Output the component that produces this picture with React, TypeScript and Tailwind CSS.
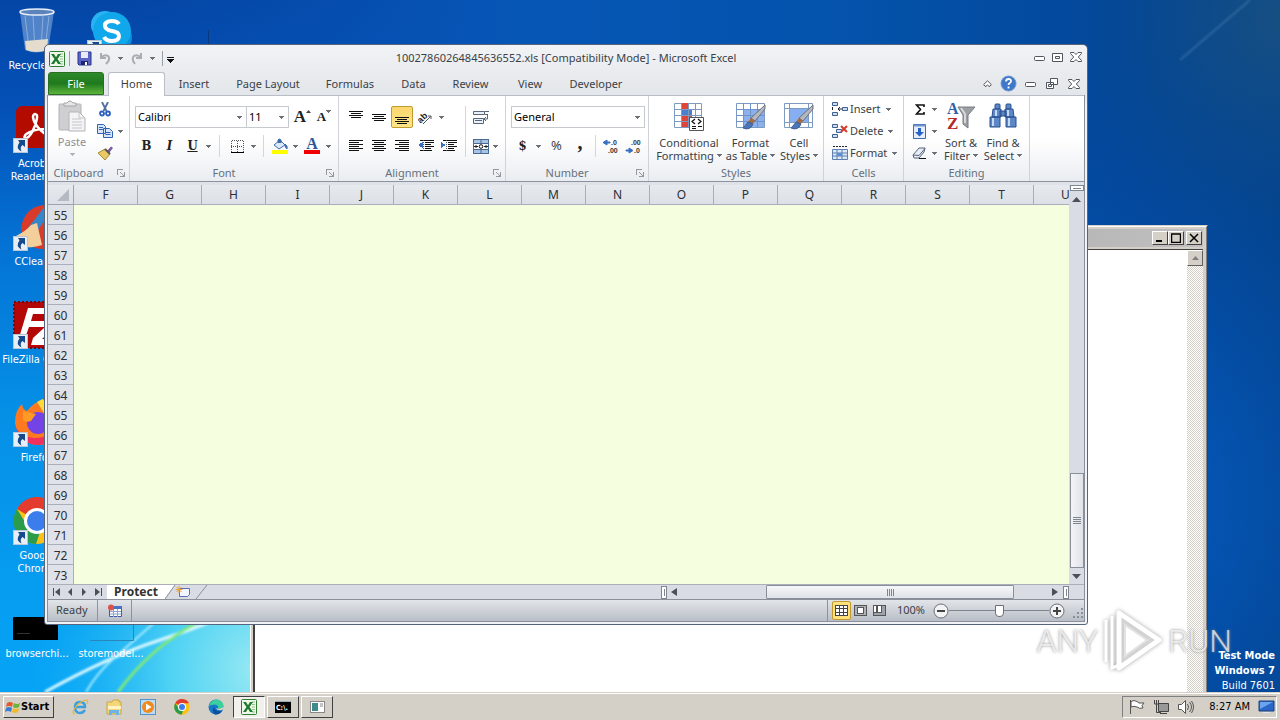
import type { ReactNode } from "react";

const columns = "FGHIJKLMNOPQRSTU".split("");
const rows = Array.from({ length: 19 }, (_, i) => i + 55);

/* ---------- small shared bits ---------- */

const Drop = ({ className = "" }: { className?: string }) => (
  <svg width="5" height="3" viewBox="0 0 5 3" className={`shrink-0 ${className}`} shapeRendering="crispEdges">
    <path d="M0 0h5L2.5 3z" fill="#6b6f76" />
  </svg>
);

const DropButton = ({ label, className = "w-2" }: { label: string; className?: string }) => (
  <button aria-label={label} className={`flex h-[22px] items-center justify-center ${className}`}>
    <Drop />
  </button>
);

const Tool = ({
  label,
  className = "w-[23px]",
  children,
}: {
  label: string;
  className?: string;
  children: ReactNode;
}) => (
  <button aria-label={label} className={`flex h-[22px] shrink-0 items-center justify-center ${className}`}>
    {children}
  </button>
);

const Divider = ({ className = "bg-[#d3d6da]" }: { className?: string }) => (
  <div className={`w-px shrink-0 self-stretch ${className}`} />
);

const Group = ({
  title,
  launcher,
  className = "",
  children,
}: {
  title: string;
  launcher?: boolean;
  className?: string;
  children: ReactNode;
}) => (
  <section className={`flex shrink-0 flex-col border-r border-[#cfd3d8] ${className}`}>
    <div className="h-[69px]">{children}</div>
    <div className="relative flex h-4 items-center justify-center text-[#66707c]">
      <span className={launcher ? "pr-5" : ""}>{title}</span>
      {launcher && (
        <button aria-label={`${title} options`} className="absolute right-1 top-1">
          <svg width="8" height="8" viewBox="0 0 8 8" fill="none" stroke="#9398a0" shapeRendering="crispEdges">
            <path d="M.5 6V.5H6M3 3l4 4M7.500 3v4.500H3" />
          </svg>
        </button>
      )}
    </div>
  </section>
);

type Line = [x: number, y: number, width: number];

const Lines = ({ rows }: { rows: Line[] }) => (
  <svg width="15" height="15" viewBox="0 0 15 15" shapeRendering="crispEdges">
    {rows.map(([x, y, w]) => (
      <rect key={y} x={x} y={y} width={w} height="1" fill="#111" />
    ))}
  </svg>
);

const ExcelIcon = () => (
  <svg width="16" height="16" viewBox="0 0 16 16">
    <rect x=".5" y=".5" width="15" height="15" rx="1" fill="#eef7ea" stroke="#2f7d32" />
    <path d="M11 3h3M11 5.500h3M11 8h3M11 10.500h3M11 13h3" stroke="#8fc48a" />
    <path d="M2 3h3l2 3.300L9 3h3L8.500 8l3.500 5H9L7 9.700 5 13H2l3.500-5z" fill="#1f7a2c" />
  </svg>
);

const Select = ({ label, value, className }: { label: string; value: string; className: string }) => (
  <div className={`relative h-[22px] border border-[#c6cacf] bg-white ${className}`}>
    <select
      aria-label={label}
      defaultValue={value}
      className="h-full w-full appearance-none bg-transparent pl-[2px] text-[11px] text-black outline-none"
    >
      <option>{value}</option>
    </select>
    <Drop className="pointer-events-none absolute right-1 top-[9px]" />
  </div>
);

/* ---------- desktop ---------- */

const Wallpaper = () => (
  <svg className="absolute inset-0 h-full w-full" viewBox="0 0 1280 692" preserveAspectRatio="none" aria-hidden="true">
    <defs>
      <linearGradient id="base" x1="0" y1="0" x2="0" y2="1">
        <stop offset="0" stopColor="#0446a6" />
        <stop offset=".15" stopColor="#0450b6" />
        <stop offset=".35" stopColor="#0472d4" />
        <stop offset=".6" stopColor="#0590e6" />
        <stop offset="1" stopColor="#06a4f6" />
      </linearGradient>
      <linearGradient id="east" x1="0" y1="0" x2="1" y2="0">
        <stop offset=".1" stopColor="#0650b2" stopOpacity="0" />
        <stop offset=".4" stopColor="#0656b6" />
        <stop offset=".65" stopColor="#0453ac" />
        <stop offset=".88" stopColor="#03479a" />
        <stop offset="1" stopColor="#04448e" />
      </linearGradient>
      <radialGradient id="glow" gradientUnits="userSpaceOnUse" cx="260" cy="670" r="230">
        <stop offset="0" stopColor="#9aeaf2" />
        <stop offset=".4" stopColor="#4ed2f4" />
        <stop offset="1" stopColor="#12b0f5" stopOpacity="0" />
      </radialGradient>
      <radialGradient id="blue" gradientUnits="userSpaceOnUse" cx="1090" cy="500" r="360">
        <stop offset="0" stopColor="#0560c8" />
        <stop offset="1" stopColor="#0450b0" stopOpacity="0" />
      </radialGradient>
      <radialGradient id="corner" gradientUnits="userSpaceOnUse" cx="1280" cy="20" r="220">
        <stop offset="0" stopColor="#174f82" />
        <stop offset="1" stopColor="#0a4a8c" stopOpacity="0" />
      </radialGradient>
      <filter id="soft">
        <feGaussianBlur stdDeviation="1" />
      </filter>
    </defs>
    <rect width="1280" height="692" fill="url(#base)" />
    <rect width="1280" height="692" fill="url(#east)" />
    <rect width="1280" height="692" fill="url(#blue)" />
    <rect width="1280" height="692" fill="url(#corner)" />
    <rect width="600" height="692" fill="url(#glow)" />
    <path d="M1180 60 1250 0" stroke="#4a83b5" strokeWidth="2" opacity=".5" filter="url(#soft)" />
    <path d="M208.500 30v16" stroke="#083a80" />
    <g fill="none" filter="url(#soft)">
      <path d="M45 692Q110 656 160 640 185 632 210 622" stroke="#d8f8ff" strokeWidth="3" />
      <path d="M86 692Q98 672 112 660L155 622" stroke="#a5ecff" strokeWidth="2" />
      <path d="M118 692Q150 648 198 622" stroke="#7fe87a" strokeWidth="3" />
    </g>
  </svg>
);

const ShortcutArrow = () => (
  <g>
    <rect x=".5" y="33.500" width="14" height="14" fill="#e8eef5" stroke="#b8c6d6" />
    <path d="M5 35h7v7l-2.500-2q-3 2-1 6.500Q2 43 6.500 37.500z" fill="#174a8c" />
  </g>
);

const DesktopIcon = ({
  label,
  className = "",
  children,
}: {
  label?: string;
  className?: string;
  children: ReactNode;
}) => (
  <a
    href="#"
    className={`flex flex-col items-center pt-[7px] text-center font-[family-name:'DejaVu_Sans_Condensed','DejaVu_Sans',sans-serif] text-[11px] leading-[13px] text-white ${className}`}
  >
    <svg width="48" height="48" viewBox="0 0 48 48" className="mb-1 shrink-0" aria-hidden="true">
      {children}
    </svg>
    {label && <span className="w-[72px]">{label}</span>}
  </a>
);

const Desktop = () => (
  <nav aria-label="Desktop" className="relative grid w-[148px] auto-rows-[98px] grid-cols-2">
    <DesktopIcon label="Recycle Bin" className="col-start-1 row-start-1">
      <path d="M7 5 12 43q12 5 23 0L41 5z" fill="#9dbde6" opacity=".5" />
      <path d="m12 9 4 32M20 9l2 34M30 9l-2 34M36 9l-4 32" stroke="#dfeaf8" opacity=".4" />
      <path d="m12 34 23-2-1 11q-11 4-21 0z" fill="#e4dccd" />
      <ellipse cx="24" cy="5" rx="17" ry="3" fill="#5d83bd" stroke="#e6eef8" strokeWidth="1.500" />
    </DesktopIcon>
    <DesktopIcon className="col-start-2 row-start-1">
      <circle cx="18" cy="18" r="14" fill="#28b4f2" />
      <circle cx="31" cy="31" r="14" fill="#0a8ee0" />
      <circle cx="25" cy="24" r="19" fill="#10a8ea" />
      <path
        d="M32 17q-2-3-7-3-7 0-7 4.500t7 5.500q7 1 7 5 0 5-7 5-6 0-8-4"
        fill="none"
        stroke="#fff"
        strokeWidth="4"
      />
      <ShortcutArrow />
    </DesktopIcon>
    <DesktopIcon label="Acrobat Reader DC" className="col-start-1 row-start-2">
      <rect x="3" y="1" width="43" height="42" rx="6" fill="#b30b00" />
      <path
        d="M12 33c-3-4 9-8 15-9 6 0 12 2 10 5-3 4-16-8-17-17 0-4 5-4 4 1-1 8-7 21-12 20z"
        fill="none"
        stroke="#fff"
        strokeWidth="2.500"
      />
      <ShortcutArrow />
    </DesktopIcon>
    <DesktopIcon label="CCleaner" className="col-start-1 row-start-3">
      <path d="M8 25Q11 5 30 2q17 0 17 22T30 46Q12 46 8 25" fill="#d93b2b" />
      <path d="M15 25 32 3l7 4-17 24z" fill="#3487cc" />
      <path d="M3 33q10-5 15-11l6-2 5 22q-14 4-20 1z" fill="#f2cf9b" />
      <ShortcutArrow />
    </DesktopIcon>
    <DesktopIcon label="FileZilla Client" className="col-start-1 row-start-4">
      <rect x="1" y="1" width="46" height="46" fill="#b40808" stroke="#7e0505" strokeWidth="2" strokeDasharray="2 2" />
      <path d="M15 7h20l-2 6H20l-2 7h12l-2 6H16l-4 11H6zM24 20h20l-3 6-12 12h13l-2 6H18l2-7 12-11h-9z" fill="#fff" />
      <ShortcutArrow />
    </DesktopIcon>
    <DesktopIcon label="Firefox" className="col-start-1 row-start-5">
      <path d="M2 24Q2 11 9 5q1 6 5 7Q24 0 31 2q4 6 10 9 6 8 5 17-3 18-21 18Q6 45 2 24" fill="#ff7a1f" />
      <path d="M24 3q5-3 6-3 4 7 11 11 4 4 3 12l-13-9z" fill="#ffd83c" />
      <path d="M3 29q9 13 27 9l13-7q-4 14-17 15Q8 46 3 29" fill="#f0315f" />
      <circle cx="25" cy="24" r="11" fill="#7542e5" />
      <path d="m10 12 13 3-5 7q-6 2-8-1z" fill="#ff9b24" />
      <ShortcutArrow />
    </DesktopIcon>
    <DesktopIcon label="Google Chrome" className="col-start-1 row-start-6">
      <circle cx="24" cy="24" r="23" fill="#fbc116" />
      <path d="M24 24 4 12A23 23 0 0 1 45 13H24z" fill="#e33b2e" />
      <path d="M4 12 15 30l12 5-4 12A23 23 0 0 1 4 12" fill="#2c9b4a" />
      <circle cx="24" cy="24" r="13" fill="#fff" />
      <circle cx="24" cy="24" r="10" fill="#3b7ded" />
      <ShortcutArrow />
    </DesktopIcon>
    <DesktopIcon label="browserchi..." className="col-start-1 row-start-7">
      <rect x="0" y="22" width="45" height="23" />
      <path d="M4 38.500h13" stroke="#333" />
    </DesktopIcon>
    <DesktopIcon label="storemodel..." className="col-start-2 row-start-7">
      <path d="M3 45.500h43.500V22" fill="none" stroke="#2a86b8" />
    </DesktopIcon>
  </nav>
);

/* ---------- classic window behind ---------- */

const CaptionButton = ({ label, children }: { label: string; children: ReactNode }) => (
  <button
    aria-label={label}
    className="flex h-[14px] w-4 items-center justify-center border border-[#404040] border-l-white border-t-white bg-[#d4d0c8]"
  >
    <svg width="10" height="10" viewBox="0 0 10 10" fill="none" stroke="#000" strokeWidth="2">
      {children}
    </svg>
  </button>
);

const ClassicWindow = () => (
  <div className="absolute bottom-0 left-[250px] right-[72px] top-[225px] flex flex-col border-r border-t border-r-[#404040] border-t-[#d4d0c8] bg-[#d4d0c8]">
    <div className="flex flex-1 flex-col border-l border-r border-t border-l-white border-r-[#808080] border-t-white pl-[2px] pr-[3px] pt-[2px]">
      <div className="flex h-[18px] items-center justify-end bg-linear-to-r from-[#808080] to-[#c0c0c0] pr-px">
        <CaptionButton label="Minimize">
          <path d="M1 8h6" />
        </CaptionButton>
        <CaptionButton label="Maximize">
          <path d="M0 1h10M.5 1v8.500h9V1" strokeWidth="1.500" />
        </CaptionButton>
        <div className="w-[2px]" />
        <CaptionButton label="Close">
          <path d="m1 1 8 8M9 1 1 9" strokeWidth="1.500" />
        </CaptionButton>
      </div>
      <div className="mt-[2px] flex flex-1 border-l-2 border-t border-l-[#404040] border-t-[#404040] bg-white">
        <div className="flex-1" />
        <div className="w-4 bg-[repeating-conic-gradient(#d4d0c8_0_25%,#fff_0_50%)] bg-[length:2px_2px]">
          <button
            aria-label="Scroll up"
            className="flex h-4 w-4 items-center justify-center border border-[#606060] border-l-white border-t-white bg-[#d4d0c8]"
          >
            <svg width="7" height="4" viewBox="0 0 7 4">
              <path d="M0 4h7L3.500 0z" fill="#808080" />
            </svg>
          </button>
        </div>
      </div>
    </div>
  </div>
);

/* ---------- spreadsheet window ---------- */

const MinGlyph = () => (
  <svg width="11" height="9" viewBox="0 0 11 9">
    <rect x=".5" y="3.500" width="10" height="4" rx="1" fill="#fff" stroke="#50565f" />
  </svg>
);

const CloseGlyph = () => (
  <svg width="12" height="10" viewBox="0 0 12 10">
    <path
      d="M.5.5h3.500l2 2 2-2h3.500v1L8.300 5l3.200 3.500v1H8l-2-2-2 2H.5v-1L3.700 5 .5 1.500z"
      fill="#fff"
      stroke="#50565f"
    />
  </svg>
);

const TitleBar = () => (
  <header className="relative flex h-[27px] shrink-0 items-center pl-[2px] pr-[3px]">
    <ExcelIcon />
    <Divider className="my-[6px] ml-1 bg-[#9aa0a8]" />
    <Tool label="Save" className="ml-[3px] w-[22px]">
      <svg width="15" height="15" viewBox="0 0 15 15">
        <path d="M1 1h13v13H2L1 13z" fill="#5b63c4" stroke="#2b3390" />
        <path d="M4 1h7v6H4z" fill="#e8ecfa" />
        <path d="M4 10h7v4H4z" fill="#1f2670" />
        <path d="M8 11h2v3H8z" fill="#fff" />
      </svg>
    </Tool>
    <Tool label="Undo" className="w-[21px]">
      <svg width="13" height="13" viewBox="0 0 13 13" fill="none" stroke="#a9adb3" strokeWidth="2">
        <path d="M2 1v5h5M2 6q3-4 7-2 3 3-2 8" />
      </svg>
    </Tool>
    <DropButton label="Undo list" />
    <Tool label="Redo" className="w-[24px]">
      <svg width="13" height="13" viewBox="0 0 13 13" fill="none" stroke="#a9adb3" strokeWidth="2">
        <path d="M11 1v5H6M11 6Q8 2 4 4q-3 3 1 8" />
      </svg>
    </Tool>
    <DropButton label="Redo list" />
    <Divider className="my-[6px] ml-[6px] bg-[#9aa0a8]" />
    <Tool label="Customize toolbar" className="w-[14px] pt-[2px]">
      <svg width="7" height="6" viewBox="0 0 7 6" shapeRendering="crispEdges">
        <path d="M0 0h7v1H0zM0 2h7L3.500 6z" fill="#111" />
      </svg>
    </Tool>
    <h1 className="pointer-events-none absolute inset-x-0 whitespace-pre text-center">
      10027860264845636552.xls [Compatibility Mode] - Microsoft Excel
    </h1>
    <div className="ml-auto flex items-center gap-[7px] pb-[3px]">
      <button aria-label="Minimize">
        <MinGlyph />
      </button>
      <button aria-label="Maximize">
        <svg width="11" height="9" viewBox="0 0 11 9" fill="#fff" stroke="#50565f">
          <path d="M.5.5h10v8H.5zM3.500 3.500h4v2h-4z" />
        </svg>
      </button>
      <button aria-label="Close">
        <CloseGlyph />
      </button>
    </div>
  </header>
);

const tabs = [
  ["Insert", "w-[58px]"],
  ["Page Layout", "w-[90px]"],
  ["Formulas", "w-[74px]"],
  ["Data", "w-[53px]"],
  ["Review", "w-[61px]"],
  ["View", "w-[58px]"],
  ["Developer", "w-[74px]"],
];

const TabStrip = () => (
  <div className="flex h-[23px] shrink-0 items-stretch px-px">
    <button className="w-14 rounded-t-[3px] border border-[#2a6d20] bg-linear-to-b from-[#2f8a2b] via-[#1f7a1e] to-[#5cb43c] pt-px text-white">
      File
    </button>
    <button className="relative z-10 -mb-px ml-1 w-[57px] rounded-t-[3px] border border-b-0 border-[#b9bec6] bg-white">
      Home
    </button>
    {tabs.map(([name, width]) => (
      <button key={name} className={`pt-[2px] ${width}`}>
        {name}
      </button>
    ))}
    <div className="ml-auto flex items-center gap-[10px] pr-1">
      <button aria-label="Minimize the ribbon">
        <svg width="9" height="7" viewBox="0 0 9 7" fill="#fff" stroke="#50565f">
          <path d="M4.500.8 8.300 4.500 7 6.300H6L4.500 5 3 6.300H2L.7 4.500z" />
        </svg>
      </button>
      <button aria-label="Help" className="-mx-[2px]">
        <svg width="17" height="17" viewBox="0 0 17 17">
          <circle cx="8.500" cy="8.500" r="7.500" fill="#3f78c9" stroke="#6d97d6" />
          <path
            d="M6 6.500q0-2.500 2.600-2.500T11 6.300q0 1.200-1.500 2-1 .6-1 1.700M8.500 11.500v2"
            fill="none"
            stroke="#fff"
            strokeWidth="1.800"
          />
        </svg>
      </button>
      <button aria-label="Minimize workbook">
        <MinGlyph />
      </button>
      <button aria-label="Restore workbook">
        <svg width="12" height="11" viewBox="0 0 12 11" fill="#fff" stroke="#50565f">
          <path d="M4.500.5h7v6h-7zM.5 4.500h7v6h-7zM2.500 6.500h3v2h-3z" />
        </svg>
      </button>
      <button aria-label="Close workbook">
        <CloseGlyph />
      </button>
    </div>
  </div>
);

const Serif = ({ className = "text-[#222]", children }: { className?: string; children: ReactNode }) => (
  <span className={`font-[family-name:'Liberation_Serif',serif] font-bold ${className}`}>{children}</span>
);

const Slab = ({ className = "", children }: { className?: string; children: ReactNode }) => (
  <span
    className={`font-[family-name:'DejaVu_Serif_Condensed','DejaVu_Serif',serif] text-[13px] font-bold text-[#222] ${className}`}
  >
    {children}
  </span>
);

const ClipboardGroup = () => (
  <Group title="Clipboard" launcher className="w-[82px]">
    <div className="flex pt-[2px]">
      <button className="flex w-12 flex-col items-center pt-[2px] text-[#8b8f94]">
        <svg width="30" height="33" viewBox="0 0 30 33">
          <rect x="2" y="4" width="22" height="26" rx="1" fill="#cfcfd1" stroke="#b4b4b8" />
          <path d="M7 6V3h3q3-4 6 0h3v3z" fill="#e6e6e8" stroke="#a5a5a9" />
          <path d="M12 12h10l6 6v13H12z" fill="#f4f4f6" stroke="#b4b4b8" />
          <path d="M22 12v6h6M15 19h9M15 22h10M15 25h10M15 28h10" fill="none" stroke="#c6c6ca" />
        </svg>
        <span className="leading-[18px]">Paste</span>
        <Drop className="mt-[2px] opacity-50" />
      </button>
      <div className="flex flex-col">
        <Tool label="Cut" className="w-[18px]">
          <svg width="12" height="15" viewBox="0 0 12 15" fill="none" stroke="#2a5fc0" strokeWidth="1.800">
            <path d="M3 0 7.500 9M9 0 4.500 9" stroke="#4f6f9e" />
            <circle cx="3" cy="11.500" r="2" />
            <circle cx="9" cy="11.500" r="2" />
          </svg>
        </Tool>
        <div className="flex">
          <Tool label="Copy" className="w-[18px]">
            <svg width="16" height="14" viewBox="0 0 16 14" fill="#d6e5fa" stroke="#2f63b0">
              <path d="M.5.5h6l2 2v7h-8zM6.500 4.500h6l3 3v6h-9z" />
              <path d="M2 3.500h4M2 5.500h4M8.500 8.500h5M8.500 10.500h5" />
            </svg>
          </Tool>
          <DropButton label="Copy options" className="w-3" />
        </div>
        <Tool label="Format painter" className="w-[18px]">
          <svg width="16" height="14" viewBox="0 0 16 14">
            <path d="m10 5 4-4.500L16 2l-4 5z" fill="#7a5b9a" />
            <path d="M1 7 8 3l5 5-5 6z" fill="#e9c865" stroke="#a98a35" />
            <path d="m8 3 5 5" stroke="#555" strokeWidth="2" />
          </svg>
        </Tool>
      </div>
    </div>
  </Group>
);

const FontGroup = () => (
  <Group title="Font" launcher className="w-[209px]">
    <div className="flex flex-col gap-[7px] pl-[5px] pt-[10px]">
      <div className="flex">
        <Select label="Font" value="Calibri" className="w-[112px]" />
        <Select label="Font size" value="11" className="-ml-px w-[43px]" />
        <Tool label="Increase font size" className="w-[27px]">
          <Serif className="text-[17px] leading-4 text-[#222]">A</Serif>
          <svg width="5" height="3" viewBox="0 0 5 3" className="mb-3">
            <path d="M0 3h5L2.500 0z" fill="#444" />
          </svg>
        </Tool>
        <Tool label="Decrease font size" className="w-4">
          <Serif className="text-[13px] text-[#222]">A</Serif>
          <Drop className="mb-3" />
        </Tool>
      </div>
      <div className="flex items-center">
        <Tool label="Bold">
          <Slab>B</Slab>
        </Tool>
        <Tool label="Italic">
          <Slab className="italic">I</Slab>
        </Tool>
        <Tool label="Underline">
          <Slab className="underline">U</Slab>
        </Tool>
        <DropButton label="Underline style" />
        <Divider className="mx-[7px] bg-[#d3d6da]" />
        <Tool label="Borders" className="w-5">
          <svg width="13" height="13" viewBox="0 0 13 13" fill="none" stroke="#555" shapeRendering="crispEdges">
            <path d="M.5.5h12v11M.5.5v11M6.500.5v11M0 6.500h12" strokeDasharray="1 1" />
            <path d="M0 12.500h13" stroke="#000" />
          </svg>
        </Tool>
        <DropButton label="Border style" className="w-3" />
        <Divider className="mx-1 bg-[#d3d6da]" />
        <Tool label="Fill color" className="w-[23px]">
          <svg width="16" height="16" viewBox="0 0 16 16">
            <path d="m2 7 6-5 5 5-6 4z" fill="#dbe8f8" stroke="#3f6cab" />
            <path d="M6 5V2q1-2 3 0v3M13 6q3 2 2 5-2-1-2-5" fill="#3f6cab" stroke="#3f6cab" />
            <path d="M0 12h16v4H0z" fill="#ff0" />
          </svg>
        </Tool>
        <DropButton label="Fill colors" />
        <Tool label="Font color" className="w-[26px]">
          <span className="flex flex-col items-center">
            <Serif className="text-base leading-3 text-[#2f5597]">A</Serif>
            <span className="h-1 w-4 bg-[#f00000]" />
          </span>
        </Tool>
        <DropButton label="Font colors" className="w-[6px]" />
      </div>
    </div>
  </Group>
);

const centered = (top: number, count: number): Line[] =>
  Array.from({ length: count }, (_, i) => (i % 2 ? [2, top + i * 2, 10] : [0, top + i * 2, 14]));

const AlignmentGroup = () => (
  <Group title="Alignment" launcher className="w-[167px]">
    <div className="flex pl-[6px] pt-[10px]">
      <div className="flex w-[120px] flex-col gap-[7px]">
        <div className="flex items-center">
          <Tool label="Top align">
            <Lines rows={centered(1, 4)} />
          </Tool>
          <Tool label="Middle align">
            <Lines rows={centered(4, 4)} />
          </Tool>
          <Tool
            label="Bottom align"
            className="w-[22px] rounded-[2px] border border-[#c29b2e] bg-linear-to-b from-[#fbd76c] to-[#ffe58a]"
          >
            <Lines rows={centered(7, 4)} />
          </Tool>
          <Tool label="Orientation" className="w-6">
            <svg width="18" height="18" viewBox="0 0 18 18" fill="none" stroke="#555">
              <path d="M7 16 15 8M12 8h3v3" />
              <text
                x="1"
                y="13"
                transform="rotate(-45 6 10)"
                fill="#222"
                stroke="none"
                fontSize="9"
                fontWeight="bold"
                fontFamily="Liberation Sans"
              >
                ab
              </text>
            </svg>
          </Tool>
          <DropButton label="Orientation options" />
        </div>
        <div className="flex items-center">
          <Tool label="Align left">
            <Lines rows={[[0, 1, 14], [0, 3, 10], [0, 5, 14], [0, 7, 10], [0, 9, 14], [0, 11, 10]]} />
          </Tool>
          <Tool label="Center">
            <Lines rows={centered(1, 6)} />
          </Tool>
          <Tool label="Align right">
            <Lines rows={[[0, 1, 14], [4, 3, 10], [0, 5, 14], [4, 7, 10], [0, 9, 14], [4, 11, 10]]} />
          </Tool>
          {[
            ["Decrease indent", "M5 3 0 6l5 3z"],
            ["Increase indent", "M0 3l5 3-5 3z"],
          ].map(([label, d]) => (
            <Tool key={label} label={label} className="ml-px w-[22px]">
              <svg width="16" height="14" viewBox="0 0 16 14" shapeRendering="crispEdges">
                <path d="M2 1.500h14M7 3.500h9M7 5.500h6M7 7.500h9M7 9.500h6M2 11.500h12" stroke="#111" />
                <path d={d} fill="#3a6fc0" />
                <path d="M5.500 1v12" stroke="#555" strokeDasharray="1 1" />
              </svg>
            </Tool>
          ))}
        </div>
      </div>
      <Divider />
      <div className="flex flex-col gap-[7px] pl-[3px]">
        <Tool label="Wrap text">
          <svg width="16" height="15" viewBox="0 0 16 15" fill="#eaf0f8" stroke="#5a6577">
            <path d="M.5 1.500h11v3H.5zM.5 8.500h10v5H.5z" />
            <path d="M2 10.500h7M12 1.500h4M12 4.500h3M14.500 5v4h-3M13 7l-2 2 2 2" fill="none" />
          </svg>
        </Tool>
        <div className="flex">
          <Tool label="Merge and center">
            <svg width="16" height="15" viewBox="0 0 16 15">
              <rect x=".5" y=".5" width="15" height="14" fill="#a9c3e4" stroke="#4a6a94" />
              <path d="M1 4.500h15M1 10.500h15M8 0v4M8 11v4" stroke="#4a6a94" />
              <path d="M1 5h14v5H1z" fill="#fff" />
              <path d="M1 7.500h4M11 7.500h4M3 6v3M13 6v3" stroke="#222" />
              <circle cx="8" cy="7.500" r="1.800" fill="none" stroke="#111" />
            </svg>
          </Tool>
          <DropButton label="Merge options" className="w-[6px]" />
        </div>
      </div>
    </div>
  </Group>
);

const DecimalIcon = ({ left }: { left?: boolean }) => (
  <svg width="18" height="18" viewBox="0 0 18 18" fontSize="7" fontWeight="bold" fontFamily="Liberation Sans" fill="#333">
    <text x={left ? 9 : 6} y="8">
      {left ? ".0" : ".00"}
    </text>
    <text x={left ? 6 : 9} y="16">
      {left ? ".00" : ".0"}
    </text>
    {left ? (
      <path d="M1 5.500 5 3v2h3v1H5v2z" fill="#3a6fc0" stroke="#3a6fc0" />
    ) : (
      <path d="M8 13.500 4 11v2H1v1h3v2z" fill="#3a6fc0" stroke="#3a6fc0" />
    )}
  </svg>
);

const NumberGroup = () => (
  <Group title="Number" launcher className="w-[143px]">
    <div className="flex flex-col gap-[7px] pl-[5px] pt-[10px]">
      <Select label="Number format" value="General" className="w-[134px]" />
      <div className="flex items-center">
        <Tool label="Accounting format">
          <Slab className="leading-4">$</Slab>
        </Tool>
        <DropButton label="Currencies" />
        <Tool label="Percent style" className="ml-[3px] w-[23px]">
          <span className="text-[13px]">%</span>
        </Tool>
        <Tool label="Comma style" className="w-6">
          <Serif className="pb-2 text-xl leading-4 text-[#222]">,</Serif>
        </Tool>
        <Divider className="mx-[3px] bg-[#d3d6da]" />
        <Tool label="Increase decimal">
          <DecimalIcon left />
        </Tool>
        <Tool label="Decrease decimal">
          <DecimalIcon />
        </Tool>
      </div>
    </div>
  </Group>
);

const BigButton = ({
  lines,
  className,
  children,
}: {
  lines: [string, string];
  className: string;
  children: ReactNode;
}) => (
  <button className={`flex shrink-0 flex-col items-center whitespace-nowrap leading-[13px] ${className}`}>
    <svg width="32" height="32" viewBox="0 0 32 32" className="mb-1">
      {children}
    </svg>
    <span>{lines[0]}</span>
    <span className="flex items-center gap-[3px]">
      {lines[1]}
      <Drop />
    </span>
  </button>
);

const Brush = () => (
  <g>
    <path d="m30 9-10 12-4-3L30 5z" fill="#b4b8bf" stroke="#6d727b" />
    <path d="m20 21-4-3-3 4 4 3z" fill="#a8693c" />
    <path d="M13 22q-2 3-5 6 7 3 10-4z" fill="#4a76b8" stroke="#3c5f94" />
  </g>
);

const StylesGroup = () => (
  <Group title="Styles" className="w-[175px]">
    <div className="flex pl-[7px] pt-1">
      <BigButton lines={["Conditional", "Formatting"]} className="w-[66px]">
        <path d="M1.500 3.500h27v24h-27z" fill="#fff" stroke="#7f9ac0" />
        <path d="M8 3h7v6H8zM8 15h11v6H8zM8 21h7v6H8z" fill="#e0453a" />
        <path d="M8 9h11v6H8z" fill="#4a7fd0" />
        <path d="M1 9.500h28M1 15.500h28M1 21.500h28M8.500 3v25M15.500 3v25M22.500 3v25" stroke="#7f9ac0" fill="none" />
        <path d="M16.500 17.500h14v13h-14z" fill="#fff" stroke="#555" />
        <path
          d="m22 19-3 2.500 3 2.500M19 26.500h4M25 19l3 2.500-3 2.500M19 28.500h4M25 26.500h4"
          fill="none"
          stroke="#111"
          strokeWidth="1.200"
        />
      </BigButton>
      <BigButton lines={["Format", "as Table"]} className="w-[57px]">
        <path d="M1.500 3.500h28v24h-28z" fill="#fff" stroke="#7f9ac0" />
        <path d="M8 9h21v18H8z" fill="#8cb0ec" />
        <path d="M1 9.500h29M1 15.500h29M1 21.500h29M8.500 3v25M15.500 3v25M22.500 3v25" stroke="#6d92cc" fill="none" />
        <Brush />
      </BigButton>
      <BigButton lines={["Cell", "Styles"]} className="w-10">
        <path d="M1.500 3.500h28v24h-28z" fill="#fff" stroke="#7f9ac0" />
        <path d="M1 8.500h29M1 22.500h29M6.500 3v25M25.500 3v25" stroke="#7f9ac0" fill="none" />
        <path d="M7 9h18v13H7z" fill="#86aef0" />
        <Brush />
      </BigButton>
    </div>
  </Group>
);

const RowButton = ({ label, children }: { label: string; children: ReactNode }) => (
  <button className="flex h-[22px] items-center gap-[2px]">
    <svg width="16" height="16" viewBox="0 0 16 16">
      {children}
    </svg>
    {label}
    <Drop className="ml-[3px]" />
  </button>
);

const CellsGroup = () => (
  <Group title="Cells" className="w-20">
    <div className="flex flex-col pl-2 pt-[2px]">
      <RowButton label="Insert">
        <path d="M.5 1.500h5v3h-5zM.5 11.500h5v3h-5zM10.500 6.500h5v3h-5z" fill="#cfdef2" stroke="#3f5f8f" />
        <path d="M.5 6v3M6 8h4M8 6 6 8l2 2" fill="none" stroke="#222" />
      </RowButton>
      <RowButton label="Delete">
        <path d="M.5 1.500h5v3h-5zM.5 11.500h5v3h-5zM4.500 6.500h5v3h-5z" fill="#cfdef2" stroke="#3f5f8f" />
        <path d="m9 3 6 6M15 3 9 9" stroke="#d43a2a" strokeWidth="2" />
      </RowButton>
      <RowButton label="Format">
        <path d="M.5 4.500h15v10H.5z" fill="#dce8f7" stroke="#5f7fae" />
        <path d="M5 5v9M10 5v9M1 8h14M1 11h14" stroke="#5f7fae" />
        <path d="M5 8h5v3H5z" fill="#5b8fd8" />
        <path d="M1 1.500h14" stroke="#222" strokeDasharray="2 1" />
      </RowButton>
    </div>
  </Group>
);

const EditingGroup = () => (
  <Group title="Editing" className="w-[126px]">
    <div className="flex pl-[6px] pt-[2px]">
      <div className="flex w-[29px] flex-col">
        <div className="flex">
          <Tool label="Sum" className="w-[19px]">
            <svg width="10" height="11" viewBox="0 0 10 11" fill="none" stroke="#111" strokeWidth="1.600">
              <path d="M9 3V1H1.500L5.500 5.500 1.500 10H9V8" />
            </svg>
          </Tool>
          <DropButton label="Sum options" className="w-[10px]" />
        </div>
        <div className="flex">
          <Tool label="Fill" className="w-[19px]">
            <svg width="13" height="15" viewBox="0 0 13 15">
              <path d="M.5.5h12v14H.5z" fill="#e4eefc" stroke="#3f6cab" />
              <path d="M.5.5h12v2H.5z" fill="#6f94cc" />
              <path d="M5 4h3v4h3l-4.500 4.500L2 8h3z" fill="#2a62c4" />
            </svg>
          </Tool>
          <DropButton label="Fill options" className="w-[10px]" />
        </div>
        <div className="flex">
          <Tool label="Clear" className="w-[19px]">
            <svg width="15" height="12" viewBox="0 0 15 12">
              <path d="m1 8 6-7h6l-1 4-5 6H2z" fill="#e9eef6" stroke="#55637a" />
              <path d="m1 8 6 .5 6-7" fill="none" stroke="#55637a" />
              <path d="M7 11.500h7" stroke="#111" />
            </svg>
          </Tool>
          <DropButton label="Clear options" className="w-[10px]" />
        </div>
      </div>
      <div className="flex pt-[2px]">
        <BigButton lines={["Sort &", "Filter"]} className="w-11">
          <text x="2" y="14" fontSize="16" fontWeight="bold" fill="#2f5fae" fontFamily="Liberation Serif">
            A
          </text>
          <text x="2" y="29" fontSize="17" fontWeight="bold" fill="#b02a26" fontFamily="Liberation Serif">
            Z
          </text>
          <path d="M13 7h17l-7 8v13l-5-4v-9z" fill="#9c9fa3" stroke="#777b80" />
          <path d="m16 8 4 6v9" fill="none" stroke="#d6d8da" strokeWidth="2" />
        </BigButton>
        <BigButton lines={["Find &", "Select"]} className="w-10">
          <g fill="#5c88c8" stroke="#2a4f8e">
            <rect x="8" y="4" width="5" height="5" rx="1" />
            <rect x="19" y="4" width="5" height="5" rx="1" />
            <path d="M6 9h8v8H5zM18 9h8l1 8h-9zM13 11h6v5h-6zM3 17h10v10H3zM19 17h10v10H19z" />
          </g>
          <path d="M6 18v8M22 18v8M9 10v6M21 10v6" stroke="#c5daf5" strokeWidth="2" />
        </BigButton>
      </div>
    </div>
  </Group>
);

const Ribbon = () => (
  <div className="flex h-[87px] shrink-0 overflow-hidden border-b border-t border-b-[#8d939c] border-t-[#b9bec6] bg-linear-to-b from-white via-white to-[#eaedf1]">
    <ClipboardGroup />
    <FontGroup />
    <AlignmentGroup />
    <NumberGroup />
    <StylesGroup />
    <CellsGroup />
    <EditingGroup />
  </div>
);

const Sheet = () => (
  <div className="flex min-h-0 flex-1 bg-[#dfe2e8] pt-[3px]">
    <div className="min-w-0 flex-1 overflow-hidden bg-[#f5ffdf]">
      <table className="w-[1050px] table-fixed border-separate border-spacing-0 text-[#2b2f36]">
        <thead>
          <tr className="h-5 bg-linear-to-b from-[#e6e9ee] to-[#dcdfe5] text-xs leading-4">
            <th className="w-[26px] border-b border-r border-[#9ea4ad] p-0">
              <svg width="25" height="19" viewBox="0 0 25 19" className="block" aria-label="Select all">
                <path d="M21 4v12H9z" fill="#b4b9c2" />
              </svg>
            </th>
            {columns.map((c) => (
              <th key={c} scope="col" className="w-16 border-b border-r border-[#a9aeb8] p-0 pt-px font-normal">
                {c}
              </th>
            ))}
          </tr>
        </thead>
        <tbody>
          {rows.map((r) => (
            <tr key={r} className="h-5 text-xs leading-4">
              <th scope="row" className="border-b border-r border-[#a9aeb8] bg-[#dfe2e8] p-0 pt-[2px] font-normal">
                {r}
              </th>
              <td colSpan={16} className="p-0" />
            </tr>
          ))}
        </tbody>
      </table>
    </div>
    <div className="flex w-[15px] shrink-0 flex-col items-center bg-[#d9dce3]">
      <div className="flex h-[6px] w-[14px] shrink-0 items-center justify-center border border-[#7e858f] bg-white">
        <div className="h-px w-2 bg-[#7e858f]" />
      </div>
      <button aria-label="Scroll up" className="flex h-4 w-full items-center justify-center">
        <svg width="9" height="5" viewBox="0 0 9 5">
          <path d="M0 5h9L4.500 0z" fill="#4a4f58" />
        </svg>
      </button>
      <div className="flex-1" />
      <div className="flex h-[95px] w-[14px] flex-col items-center justify-center gap-px border border-[#8a9099] bg-linear-to-r from-[#f4f5f8] to-[#dfe2e8]">
        <i className="h-px w-2 bg-[#7e858f]" />
        <i className="h-px w-2 bg-[#7e858f]" />
        <i className="h-px w-2 bg-[#7e858f]" />
        <i className="h-px w-2 bg-[#7e858f]" />
      </div>
      <button aria-label="Scroll down" className="flex h-4 w-full items-center justify-center">
        <svg width="9" height="5" viewBox="0 0 9 5">
          <path d="M0 0h9L4.500 5z" fill="#4a4f58" />
        </svg>
      </button>
    </div>
  </div>
);

const sheetNav = [
  ["First sheet", "M1 0h1v8H1zM8 0v8L3 4z"],
  ["Previous sheet", "M6 0v8L2 4z"],
  ["Next sheet", "M2 0v8l4-4z"],
  ["Last sheet", "M1 0v8l5-4zM7 0h1v8H7z"],
];

const Splitter = () => (
  <div className="flex h-[13px] w-[6px] shrink-0 items-center justify-center border border-[#7e858f] bg-white">
    <div className="h-[7px] w-px bg-[#7e858f]" />
  </div>
);

const SheetBar = () => (
  <div className="flex h-[15px] shrink-0 items-center border-t border-[#a9aeb8] bg-[#d9dce3]">
    <div className="flex w-[59px] justify-center gap-[5px]">
      {sheetNav.map(([label, d]) => (
        <button key={label} aria-label={label}>
          <svg width="9" height="8" viewBox="0 0 9 8" fill="#4a4f58">
            <path d={d} />
          </svg>
        </button>
      ))}
    </div>
    <button className="h-[14px] w-[58px] bg-white text-xs font-bold leading-[14px] text-[#333]">Protect</button>
    <button aria-label="Insert worksheet">
      <svg width="46" height="14" viewBox="0 0 46 14" className="block">
        <path d="M0 0h10L0 13z" fill="#fff" />
        <path d="M10 0 0 14M42 0 31 14" stroke="#8a9099" />
        <path d="M14.500 3.500h10v6l-2 2h-8z" fill="#f2f6ff" stroke="#5b6fb5" />
        <path d="M14 1v7M10.500 4.500h7M11.500 2l5 5M16.500 2l-5 5" stroke="#e8a33a" />
      </svg>
    </button>
    <div className="flex-1" />
    <Splitter />
    <button aria-label="Scroll left" className="pl-1 pr-[6px]">
      <svg width="6" height="8" viewBox="0 0 6 8">
        <path d="M6 0v8L0 4z" fill="#4a4f58" />
      </svg>
    </button>
    <div className="w-[83px]" />
    <div className="flex h-[14px] w-[248px] items-center justify-center gap-px rounded-[1px] border border-[#8a9099] bg-linear-to-b from-[#f6f7f9] to-[#dfe2e8]">
      <i className="h-[7px] w-px bg-[#7e858f]" />
      <i className="h-[7px] w-px bg-[#7e858f]" />
      <i className="h-[7px] w-px bg-[#7e858f]" />
      <i className="h-[7px] w-px bg-[#7e858f]" />
    </div>
    <div className="w-[38px]" />
    <button aria-label="Scroll right" className="pr-[5px]">
      <svg width="6" height="8" viewBox="0 0 6 8">
        <path d="M0 0v8l6-4z" fill="#4a4f58" />
      </svg>
    </button>
    <Splitter />
    <div className="w-[15px]" />
  </div>
);

const StatusBar = () => (
  <footer className="flex h-[22px] shrink-0 items-center border-t border-[#8a9099] bg-linear-to-b from-[#e2e5e9] to-[#b9bec6] pl-2">
    <span className="w-[41px]">Ready</span>
    <Divider className="bg-[#8d939c]" />
    <button aria-label="Record macro" className="flex w-[33px] justify-center">
      <svg width="16" height="14" viewBox="0 0 16 14">
        <path d="M2.500 2.500h12v10h-12z" fill="#fff" stroke="#3f5fa8" />
        <path d="M2 2h13v3H2z" fill="#4a72c4" />
        <path d="M3 7.500h11M3 10h11M6.500 5v8M10.500 5v8" stroke="#8ba3d0" />
        <circle cx="4" cy="3.500" r="3" fill="#d9534a" />
      </svg>
    </button>
    <Divider className="bg-[#8d939c]" />
    <div className="flex-1" />
    <Divider className="bg-[#8d939c]" />
    <button
      aria-label="Normal view"
      className="ml-1 flex h-[19px] w-[19px] items-center justify-center rounded-[2px] border border-[#c29b2e] bg-[#ffe07a]"
    >
      <svg width="13" height="11" viewBox="0 0 13 11" fill="#fff" stroke="#444" shapeRendering="crispEdges">
        <path d="M.5.5h12v10H.5zM.5 3.500h12M.5 7.500h12M4.500.5v10M8.500.5v10" />
      </svg>
    </button>
    <button aria-label="Page layout view" className="flex w-[19px] justify-center">
      <svg width="13" height="11" viewBox="0 0 13 11" shapeRendering="crispEdges">
        <path d="M.5.5h12v10H.5z" fill="#aeb3bb" stroke="#555" />
        <path d="M3.500 2.500h6v6h-6z" fill="#fff" stroke="#555" />
      </svg>
    </button>
    <button aria-label="Page break preview" className="flex w-[19px] justify-center">
      <svg width="13" height="11" viewBox="0 0 13 11" shapeRendering="crispEdges">
        <path d="M.5.5h12v10H.5z" fill="#9ea4ad" stroke="#555" />
        <path d="M.5.5h3v7h-3zM4.500.5h4v7h-4z" fill="#fff" stroke="#555" />
      </svg>
    </button>
    <button className="w-11 text-center">100%</button>
    <button aria-label="Zoom out">
      <svg width="16" height="16" viewBox="0 0 16 16" className="block">
        <circle cx="8" cy="8" r="7" fill="#f2f3f5" stroke="#6b6f76" />
        <path d="M4 8h8" stroke="#444" strokeWidth="2" />
      </svg>
    </button>
    <input
      type="range"
      aria-label="Zoom"
      defaultValue={50}
      className="h-4 w-[100px] appearance-none bg-transparent bg-[linear-gradient(#7e858f,#7e858f)] bg-[length:100%_1px] bg-center bg-no-repeat [&::-webkit-slider-thumb]:h-[12px] [&::-webkit-slider-thumb]:w-[9px] [&::-webkit-slider-thumb]:appearance-none [&::-webkit-slider-thumb]:rounded-b-[4px] [&::-webkit-slider-thumb]:border [&::-webkit-slider-thumb]:border-[#6b6f76] [&::-webkit-slider-thumb]:bg-white"
    />
    <button aria-label="Zoom in">
      <svg width="16" height="16" viewBox="0 0 16 16" className="block">
        <circle cx="8" cy="8" r="7" fill="#f2f3f5" stroke="#6b6f76" />
        <path d="M4 8h8M8 4v8" stroke="#444" strokeWidth="2" />
      </svg>
    </button>
    <svg width="12" height="12" viewBox="0 0 12 12" className="ml-[7px] mt-[7px]" fill="#8a9099">
      <path d="M9 0h2v2H9zM5 4h2v2H5zM9 4h2v2H9zM1 8h2v2H1zM5 8h2v2H5zM9 8h2v2H9z" />
    </svg>
  </footer>
);

const SpreadsheetWindow = () => (
  <main className="absolute bottom-[67px] left-[44px] right-[192px] top-[44px] flex flex-col rounded-[5px] rounded-b-[3px] border border-[#56657d] bg-linear-to-b from-[#f1f3f5] via-[#e3e6ea] via-[50px] to-[#f0f2f5] to-[60px] px-[2px] pb-[2px] font-[family-name:'Noto_Sans','Open_Sans',sans-serif] text-[11px] text-[#3b3f46]">
    <TitleBar />
    <TabStrip />
    <div className="flex min-h-0 flex-1 flex-col border-x border-b border-[#8a919c]">
      <Ribbon />
      <Sheet />
      <SheetBar />
      <StatusBar />
    </div>
  </main>
);

/* ---------- taskbar ---------- */

const ChromeIcon = () => (
  <svg width="16" height="16" viewBox="0 0 48 48">
    <circle cx="24" cy="24" r="23" fill="#fbc116" />
    <path d="M24 24 4 12A23 23 0 0 1 45 13H24z" fill="#e33b2e" />
    <path d="M4 12 15 30l12 5-4 12A23 23 0 0 1 4 12" fill="#2c9b4a" />
    <circle cx="24" cy="24" r="12" fill="#fff" />
    <circle cx="24" cy="24" r="9" fill="#3b7ded" />
  </svg>
);

const Launch = ({ label, children }: { label: string; children: ReactNode }) => (
  <button aria-label={label} className="flex w-[34px] items-center justify-center">
    {children}
  </button>
);

const TaskButton = ({ label, active, children }: { label: string; active?: boolean; children: ReactNode }) => (
  <button
    aria-label={label}
    className={`flex h-[22px] w-8 items-center justify-center border ${
      active
        ? "border-b-white border-l-[#404040] border-r-white border-t-[#404040] bg-[#f2f0ed]"
        : "border-b-[#404040] border-l-white border-r-[#404040] border-t-white bg-[#d4d0c8]"
    }`}
  >
    {children}
  </button>
);

const Taskbar = () => (
  <footer className="relative flex h-7 shrink-0 items-center border-t border-[#d4d0c8] bg-[#d4d0c8] px-[3px] pt-px font-[family-name:'DejaVu_Sans_Condensed','DejaVu_Sans',sans-serif] text-[11px] text-black shadow-[inset_0_1px_0_#fff]">
    <button className="mr-[9px] flex h-[22px] w-[51px] items-center border border-b-[#404040] border-l-white border-r-[#404040] border-t-white pl-px text-[11px] font-bold">
      <svg width="16" height="15" viewBox="0 0 16 15" className="shrink-0">
        <path d="M2 3q3-2 6 0L7 7Q4 5 1 7z" fill="#e8572a" />
        <path d="M9 3q3 2 6 0l-1 4q-3 2-6 0z" fill="#6cb33e" />
        <path d="M1 8q3-2 6 0l-1 4q-3-2-6 0z" fill="#3b7bd0" />
        <path d="M8 8q3 2 6 0l-1 4q-3 2-6 0z" fill="#f5b921" />
      </svg>
      Start
    </button>
    <Launch label="Internet Explorer">
      <svg width="17" height="16" viewBox="0 0 17 16" fill="none">
        <path d="M13 11q-2 3-5 3-5 0-5-6 0-5 5-5t5 5H4" stroke="#3ba0e0" strokeWidth="2.500" />
        <path d="M3 15q-4-1 0-6 5-7 11-8 3 0 1 4" stroke="#e8b52e" strokeWidth="1.200" />
      </svg>
    </Launch>
    <Launch label="Explorer">
      <svg width="16" height="16" viewBox="0 0 16 16">
        <path d="M1 3h5l1-2h6v2h2v12H1z" fill="#f3d678" stroke="#c9a644" />
        <path d="M2 7h13v3H2z" fill="#fff3c4" />
        <path d="M3 16v-5h10v5h-3v-2H6v2z" fill="#6db4e4" />
      </svg>
    </Launch>
    <Launch label="Media Player">
      <svg width="16" height="16" viewBox="0 0 16 16">
        <rect x=".5" y=".5" width="15" height="15" fill="#bcdcf5" stroke="#4f93cf" />
        <circle cx="8" cy="8" r="6" fill="#f28a1b" />
        <path d="m6 4.500 5.500 3.500L6 11.500z" fill="#fff" />
      </svg>
    </Launch>
    <Launch label="Chrome">
      <ChromeIcon />
    </Launch>
    <Launch label="Edge">
      <svg width="16" height="16" viewBox="0 0 16 16">
        <circle cx="8" cy="8" r="7.500" fill="#1679c8" />
        <path d="M1 7q2-6 7.500-6.500Q15 1 15.500 7q-1 4-5.500 3 1-4-3-4.500-4 0-6 1.500" fill="#3ccf9e" />
        <path d="M6 8q1 5 8 4-3 4-7 3.500Q3 13 6 8" fill="#0b4f9e" />
        <path d="M8 9q1 3 6 2l2-1V8l-5 2z" fill="#d4d0c8" />
      </svg>
    </Launch>
    <div className="flex gap-[2px]">
      <TaskButton label="Excel" active>
        <ExcelIcon />
      </TaskButton>
      <TaskButton label="Command prompt">
        <svg width="16" height="12" viewBox="0 0 16 12">
          <rect width="16" height="12" />
          <rect width="16" height="1" fill="#9ab" />
          <text x="1" y="9" fill="#fff" fontSize="7" fontWeight="bold">
            C:\.
          </text>
        </svg>
      </TaskButton>
      <TaskButton label="Program">
        <svg width="15" height="12" viewBox="0 0 15 12">
          <rect x=".5" y=".5" width="14" height="11" fill="#fff" stroke="#888" />
          <rect x="2" y="2" width="6" height="8" fill="#3d8b8b" />
          <path d="M10 3h3M10 5h3" stroke="#888" />
        </svg>
      </TaskButton>
    </div>
    <div className="ml-auto flex h-[22px] items-center border border-b-white border-l-[#808080] border-r-white border-t-[#808080] pl-[6px]">
      <button aria-label="Action center" className="flex w-6">
        <svg width="16" height="16" viewBox="0 0 16 16" fill="#fff" stroke="#555">
          <path d="M1.500 1v14M2 2.500q3-2 6 0l2 1.500h5l-2 2.500 1 2.500q-4 1-6-1-3-1.500-6 0z" />
        </svg>
      </button>
      <button aria-label="Network" className="flex w-6">
        <svg width="16" height="16" viewBox="0 0 16 16" fill="#fff" stroke="#444">
          <path d="M5.500 4.500h10v8h-10z" fill="#999" />
          <path d="M1.500 1v4h4V1M3.500 1v12.500H8M7 14.500h7" fill="none" />
        </svg>
      </button>
      <button aria-label="Volume" className="flex w-8">
        <svg width="17" height="16" viewBox="0 0 17 16" fill="none" stroke="#555">
          <path d="M1.500 5.500h3l4-4v13l-4-4h-3z" fill="#fff" />
          <path d="M10.500 5q2 3 0 6M12.500 3q4 5 0 10M14.500 2q4 6 0 12" />
        </svg>
      </button>
      <time className="mr-2 whitespace-nowrap">8:27 AM</time>
      <button aria-label="Show desktop" className="mr-px flex">
        <svg width="17" height="14" viewBox="0 0 17 14">
          <path d="M1 1h15v10H1z" fill="#2a66c8" stroke="#1a3f7c" />
          <path d="M2 2h13L2 9z" fill="#6aa4ee" />
          <path d="M5 12h7v1H5z" fill="#dfe8f5" />
        </svg>
      </button>
    </div>
  </footer>
);

const Watermark = () => (
  <div className="pointer-events-none absolute bottom-[18px] right-[48px] flex items-center gap-1 font-[family-name:'Liberation_Sans_Narrow',Roboto,sans-serif] text-[32px] font-light leading-[66px] text-white/70 [text-shadow:0_0_3px_#888]">
    <span>ANY</span>
    <svg width="62" height="66" viewBox="0 0 62 66" fill="none" opacity=".8" className="drop-shadow-[0_0_2px_#888]">
      <path d="M17 5v55l40-28z" fill="#e8e8e8" fillOpacity=".5" stroke="#fff" strokeWidth="5" strokeLinejoin="round" />
      <path d="M23 17v31l22-16z" fill="#fff" stroke="#dcdcdc" strokeWidth="2" />
      <path d="M4 12v42M10 8v52l10-4" stroke="#fff" strokeWidth="3" />
    </svg>
    <span>RUN</span>
  </div>
);

const App = () => {
  return (
    <div className="flex h-screen flex-col overflow-hidden">
      <div className="relative min-h-0 flex-1 overflow-hidden">
        <Wallpaper />
        <Desktop />
        <div className="absolute -bottom-px right-[5px] text-right font-[family-name:'DejaVu_Sans_Condensed','DejaVu_Sans',sans-serif] text-[11px] leading-[15px] text-white">
          <p className="font-bold">Test Mode</p>
          <p className="font-bold">Windows 7</p>
          <p>Build 7601</p>
        </div>
        <ClassicWindow />
        <SpreadsheetWindow />
        <Watermark />
      </div>
      <Taskbar />
    </div>
  );
};

export default App;
